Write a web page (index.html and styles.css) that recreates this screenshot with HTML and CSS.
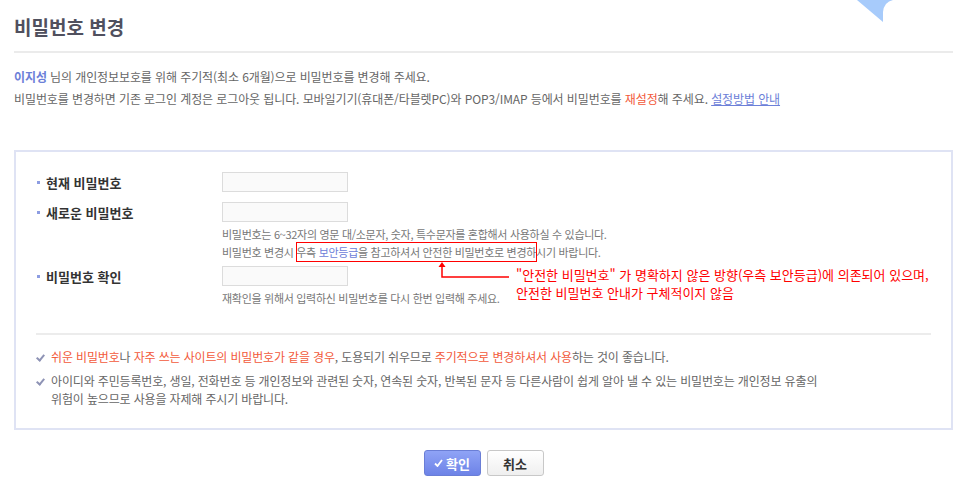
FILE: index.html
```html
<!DOCTYPE html>
<html lang="ko">
<head>
    <meta charset="UTF-8">
    <meta name="viewport" content="width=device-width, initial-scale=1.0">
    <title>비밀번호 변경</title>
    <link rel="stylesheet" href="styles.css">
</head>
<body>
    <div class="page">
        <!-- corner decoration -->
        <svg class="corner" width="40" height="24" viewBox="0 0 40 24">
            <path d="M0 0 L26 22 L26 12 Q27 2 36 0 Z" fill="#a7cbfb"/>
        </svg>

        <h1 class="title">비밀번호 변경</h1>

        <div class="intro">
            <p><strong class="user">이지성</strong> 님의 개인정보보호를 위해 주기적(최소 6개월)으로 비밀번호를 변경해 주세요.</p>
            <p>비밀번호를 변경하면 기존 로그인 계정은 로그아웃 됩니다. 모바일기기(휴대폰/타블렛PC)와 POP3/IMAP 등에서 비밀번호를 <span class="warn">재설정</span>해 주세요. <a href="#" class="link">설정방법 안내</a></p>
        </div>

        <!-- Password form -->
        <div class="form-box">
            <div class="field">
                <label class="label">현재 비밀번호</label>
                <div class="control">
                    <input type="password" class="pw">
                </div>
            </div>
            <div class="field has-help">
                <label class="label">새로운 비밀번호</label>
                <div class="control">
                    <input type="password" class="pw">
                    <p class="help">비밀번호는 6~32자의 영문 대/소문자, 숫자, 특수문자를 혼합해서 사용하실 수 있습니다.<br>비밀번호 변경시 우측 <span class="blue">보안등급</span>을 참고하셔서 안전한 비밀번호로 변경하시기 바랍니다.</p>
                </div>
            </div>
            <div class="field has-help">
                <label class="label">비밀번호 확인</label>
                <div class="control">
                    <input type="password" class="pw">
                    <p class="help">재확인을 위해서 입력하신 비밀번호를 다시 한번 입력해 주세요.</p>
                </div>
            </div>

            <div class="divider"></div>

            <ul class="notes">
                <li><span class="warn">쉬운 비밀번호</span>나 <span class="warn">자주 쓰는 사이트의 비밀번호가 같을 경우</span>, 도용되기 쉬우므로 <span class="warn">주기적으로 변경하셔서 사용</span>하는 것이 좋습니다.</li>
                <li>아이디와 주민등록번호, 생일, 전화번호 등 개인정보와 관련된 숫자, 연속된 숫자, 반복된 문자 등 다른사람이 쉽게 알아 낼 수 있는 비밀번호는 개인정보 유출의<br>위험이 높으므로 사용을 자제해 주시기 바랍니다.</li>
            </ul>

            <!-- review annotation -->
            <div class="annot-box"></div>
            <svg class="annot-arrow" width="80" height="20" viewBox="0 0 80 20">
                <polygon points="6,1 2.5,6 9.5,6" fill="#f00"/>
                <polyline points="6,5 6,16 73,16" fill="none" stroke="#f00" stroke-width="1.5"/>
            </svg>
            <p class="annot-text">"안전한 비밀번호" 가 명확하지 않은 방향(우측 보안등급)에 의존되어 있으며,<br>안전한 비밀번호 안내가 구체적이지 않음</p>
        </div>

        <div class="buttons">
            <button class="btn btn-ok">
                <svg width="9" height="8" viewBox="0 0 9 8"><polyline points="1,4.5 3.5,7 8,1" fill="none" stroke="#fff" stroke-width="1.8"/></svg>
                확인
            </button>
            <button class="btn btn-cancel">취소</button>
        </div>
    </div>
</body>
</html>
```

FILE: styles.css
```css
body {
    margin: 0;
    background-color: #ffffff;
    font-family: "Noto Sans CJK KR", "Liberation Sans", sans-serif;
    font-size: 12px;
    color: #666;
}
.page {
    position: relative;
    padding: 0 14px;
}
.corner {
    position: absolute;
    top: 0;
    left: 857px;
}
.title {
    margin: 0;
    padding: 14px 0 11px;
    font-size: 19px;
    line-height: 26px;
    font-weight: bold;
    color: #50505e;
    border-bottom: 2px solid #ebebeb;
}
.intro {
    margin-top: 13px;
}
.intro p {
    margin: 0;
    line-height: 22px;
    letter-spacing: -0.1px;
}
.user {
    color: #6c80d8;
}
.warn {
    color: #f25a3b;
}
.blue {
    color: #6c80d8;
}
.link {
    color: #6c80d8;
    text-decoration: underline;
}
.form-box {
    position: relative;
    margin-top: 40px;
    border: 2px solid #dfe3f4;
    padding: 20px 20px 20px;
}
.field {
    display: flex;
    margin-top: 10px;
}
.field:first-child {
    margin-top: 0;
}
.field.has-help + .field {
    margin-top: 5px;
}
.label {
    width: 186px;
    flex-shrink: 0;
    display: flex;
    align-items: center;
    height: 20px;
    font-size: 13px;
    font-weight: bold;
    color: #333;
}
.label::before {
    content: "";
    width: 3px;
    height: 3px;
    background-color: #8d9de2;
    margin: 0 6px 0 1px;
}
.pw {
    display: block;
    box-sizing: border-box;
    width: 126px;
    height: 20px;
    margin: 0;
    border: 1px solid #dcdcdc;
    background-color: #fafafa;
}
.help {
    margin: 3px 0 0;
    line-height: 18px;
    font-size: 11px;
    letter-spacing: -0.3px;
    color: #777;
}
.divider {
    margin-top: 26px;
    height: 2px;
    background-color: #ececec;
}
.notes {
    list-style: none;
    margin: 13px 0 0;
    padding: 0;
}
.notes li {
    position: relative;
    padding-left: 15px;
    line-height: 18px;
    margin-bottom: 6px;
    letter-spacing: -0.15px;
}
.notes li:last-child {
    margin-bottom: 0;
}
.notes li::before {
    content: "";
    position: absolute;
    left: 2px;
    top: 5px;
    width: 3px;
    height: 6px;
    border-right: 2px solid #8e93b5;
    border-bottom: 2px solid #8e93b5;
    transform: rotate(40deg);
}
.annot-box {
    position: absolute;
    left: 280px;
    top: 90px;
    width: 241px;
    height: 20px;
    box-sizing: border-box;
    border: 1.5px solid #f00;
}
.annot-arrow {
    position: absolute;
    left: 420px;
    top: 109px;
}
.annot-text {
    position: absolute;
    left: 500px;
    top: 114px;
    margin: 0;
    line-height: 18px;
    color: #f00;
    font-size: 13px;
    white-space: nowrap;
}
.buttons {
    display: flex;
    justify-content: center;
    gap: 6px;
    margin-top: 20px;
}
.btn {
    box-sizing: border-box;
    height: 26px;
    width: 57px;
    border-radius: 3px;
    font-family: "Noto Sans CJK KR", "Liberation Sans", sans-serif;
    font-size: 13px;
    font-weight: bold;
    padding: 0;
    display: flex;
    align-items: center;
    justify-content: center;
    gap: 3px;
    cursor: pointer;
}
.btn-ok {
    color: #fff;
    border: 1px solid #6a7ed6;
    background: linear-gradient(#8fa3f6, #6d83e7);
}
.btn-cancel {
    color: #333;
    border: 1px solid #c8c8c8;
    background: linear-gradient(#ffffff, #efefef);
}
```
